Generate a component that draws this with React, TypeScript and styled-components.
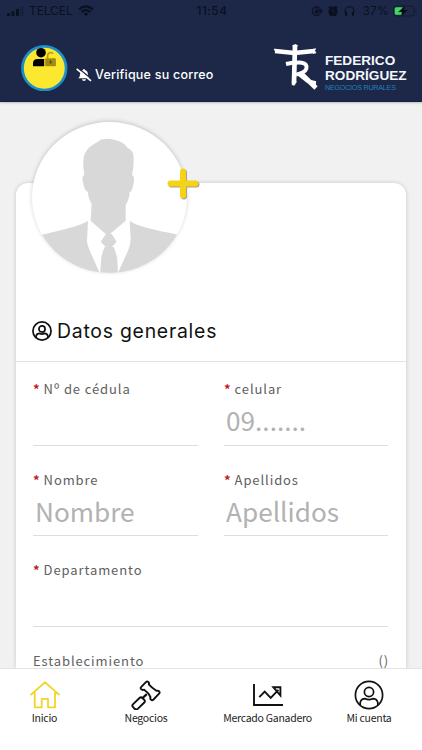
import React from "react";
import styled, { createGlobalStyle } from "styled-components";

const GlobalStyle = createGlobalStyle`
  * { box-sizing: border-box; }
  body { margin: 0; background: #f1f1f2; }
`;

const sans = `"Noto Sans CJK JP", "Noto Sans CJK SC", "Noto Sans", sans-serif`;

const Screen = styled.div`
  width: 422px;
  height: 750px;
  overflow: hidden;
  display: flex;
  flex-direction: column;
  background: #f1f1f2;
  font-family: ${sans};
`;

const Header = styled.header`
  flex: 0 0 102px;
  background: #1d2848;
  border-bottom: 1px solid #18213e;
  box-shadow: 0 1px 2px rgba(60, 70, 100, 0.3);
`;

const StatusBar = styled.div`
  height: 22px;
  display: grid;
  grid-template-columns: 1fr auto 1fr;
  align-items: center;
  padding: 0 5px 0 7px;
  color: #0b1020;
  font: 12px/22px Inter, sans-serif;
`;

const StatusGroup = styled.div<{ $end?: boolean }>`
  display: flex;
  align-items: center;
  height: 22px;
  justify-content: ${(p) => (p.$end ? "flex-end" : "flex-start")};
`;

const Carrier = styled.span`
  margin: 0 5px 0 5px;
  letter-spacing: -0.1px;
`;

const Clock = styled.span`
  font-weight: 500;
  letter-spacing: 0.4px;
`;

const Percent = styled.span`
  margin: 0 4px 0 7px;
  letter-spacing: 0.2px;
`;

const Brand = styled.div`
  display: flex;
  height: 79px;
  padding: 22px 14px 0 21px;
`;

const Message = styled.div`
  display: flex;
  align-items: center;
  height: 20px;
  margin: 21px 0 0 8px;
  gap: 3px;
  color: #fff;
  font: 450 12.5px/20px Inter, sans-serif;
  letter-spacing: 0.22px;
  white-space: nowrap;
`;

const Logo = styled.div`
  display: flex;
  margin-left: auto;
`;

const LogoText = styled.div`
  width: 83px;
  margin-left: 2px;
  padding-top: 10px;
  color: #f4f6fb;
  font: bold 13.6px/14.5px "Liberation Sans", sans-serif;
  white-space: nowrap;
`;

const LogoSub = styled.div`
  color: #1f80bd;
  font: 7.2px/9px "Liberation Sans", sans-serif;
  letter-spacing: -0.25px;
`;

const Card = styled.main`
  flex: 1;
  min-height: 0;
  display: flex;
  flex-direction: column;
  margin: 81px 16px 0;
  background: #fff;
  border-radius: 12px 12px 0 0;
  box-shadow: 0 0 4px rgba(0, 0, 0, 0.18);
`;

const CardTop = styled.div`
  flex: 0 0 179px;
  padding-left: 16px;
  border-bottom: 1px solid #e2e2e2;
`;

const Avatar = styled.div`
  position: relative;
  width: 155px;
  height: 151px;
  margin-top: -61px;
`;

const Portrait = styled.div`
  width: 155px;
  height: 151px;
  overflow: hidden;
  border-radius: 50%;
  background: #fff;
  box-shadow: 0 -1px 4px rgba(0, 0, 0, 0.18);
`;

const AddMark = styled.svg`
  position: absolute;
  left: 134px;
  top: 45px;
`;

const Title = styled.h1`
  display: flex;
  align-items: center;
  gap: 5px;
  height: 30px;
  margin: 43px 0 0;
  color: #111;
  font: 400 19.4px/30px Inter, sans-serif;
  letter-spacing: 0.76px;
`;

const Form = styled.form`
  display: grid;
  flex: none;
  grid-template-columns: 165px 164px;
  column-gap: 26px;
  row-gap: 24px;
  padding: 17px 0 0 17px;
`;

const Field = styled.label<{ $wide?: boolean }>`
  display: flex;
  flex-direction: column;
  height: 66.6px;
  grid-column: ${(p) => (p.$wide ? "1 / -1" : "auto")};
  border-bottom: 1px solid #dedede;
`;

const Label = styled.span`
  display: flex;
  justify-content: space-between;
  height: 20px;
  margin-right: -1px;
  color: #606060;
  font: 400 13px/19.4px ${sans};
  letter-spacing: 0.9px;
  white-space: pre;
`;

const Required = styled.b`
  color: #c01a28;
  font-weight: 700;
  letter-spacing: 0.2px;
`;

const Input = styled.input`
  width: 100%;
  height: 42px;
  padding: 0 0 0 2px;
  border: 0;
  outline: 0;
  background: transparent;
  font: 400 26.2px/42px ${sans};
  &::placeholder {
    color: #b2b2b2;
    opacity: 1;
  }
`;

const Nav = styled.nav`
  flex: 0 0 82px;
  position: relative;
  display: grid;
  grid-template-columns: 89px 114px 129px 74px;
  background: #fff;
  border-top: 1px solid #e4e4e4;
`;

const NavItem = styled.a<{ $active?: boolean }>`
  display: flex;
  flex-direction: column;
  align-items: center;
  padding-top: 11px;
  svg {
    color: ${(p) => (p.$active ? "#f2d42c" : "#111")};
  }
`;

const NavLabel = styled.span`
  color: #1d1d1d;
  font: 10.5px/16px ${sans};
  letter-spacing: -0.26px;
  white-space: nowrap;
`;

const Signal = () => (
  <svg width="17" height="9" viewBox="0 0 17 9" fill="#0b1020">
    <rect y="6" width="3" height="3" rx=".6" />
    <rect x="4.5" y="4.3" width="3" height="4.7" rx=".6" />
    <rect x="9" y="2" width="3" height="7" rx=".6" />
    <rect x="13.5" width="3" height="9" rx=".6" opacity=".3" />
  </svg>
);

const Wifi = () => (
  <svg width="16" height="12" viewBox="0 0 16 12" fill="none" stroke="#0b1020" strokeWidth="2.2">
    <path d="M1 4.4Q8-1.7 15 4.4M3.5 7Q8 3.3 12.5 7" />
    <path d="M5.6 8.7Q8 6.8 10.4 8.7L8 11.2Z" fill="#0b1020" stroke="none" />
  </svg>
);

const StatusIcons = () => (
  <svg width="44" height="12" viewBox="0 0 44 12" fill="none" stroke="#0b1020" strokeWidth="1.1">
    <path d="M9.2 8.4A4.3 4.3 0 1 1 9.5 4.5M7.8 5.2h3.3L9.5 7.3z" />
    <path d="M3.7 5.5h3.8v3H3.7z" fill="#0b1020" stroke="none" />
    <path d="M4.5 5.7V4.5a1.1 1.1 0 0 1 2.2 0v1.2" strokeWidth=".8" />
    <circle cx="22" cy="6.4" r="4" fill="#0b1020" />
    <path d="M17.8 3.2l2.3-1.9M26.2 3.2l-2.3-1.9M19 10.8l1-1M25 10.8l-1-1" strokeWidth="1.7" />
    <path d="M22 4v2.6l1.6.8" stroke="#1d2848" strokeWidth=".7" />
    <path d="M34.2 8V6a4.3 4.3 0 0 1 8.6 0v2" />
    <path d="M35.1 7v3.7M41.9 7v3.7" strokeWidth="2" />
  </svg>
);

const Battery = () => (
  <svg width="24" height="12" viewBox="0 0 24 12">
    <rect x=".5" y="1" width="20.5" height="10" rx="2.8" fill="none" stroke="#121a31" />
    <path d="M3 2.3h6.5v7.4H3Q1.7 9.7 1.7 8.2V3.8Q1.7 2.3 3 2.3z" fill="#42d860" />
    <path d="M12.4.4L5.5 6.9h3.6l-1 4.8 6.6-6.8h-3.8z" fill="#060b16" stroke="#1d2848" strokeWidth=".4" />
    <path d="M22.4 4.4v3.2q1-.4 1-1.6t-1-1.6" fill="#121a31" />
  </svg>
);

const UserBadge = () => (
  <svg width="47" height="47" viewBox="0 0 47 47">
    <circle cx="23.3" cy="24.2" r="21.8" fill="#fce82f" stroke="#1d8ecb" strokeWidth="2.7" />
    <circle cx="20" cy="8.7" r="4.8" />
    <path d="M12 22v-2.7Q12 14.9 16.7 14.9h6.5v7.3H13q-1 0-1-.2z" />
    <path d="M26.6 14.3v-3a3 3 0 0 1 5.4-1.5" fill="none" stroke="#b09916" strokeWidth="1.6" />
    <rect x="24.2" y="14.3" width="10.7" height="8" rx="1" fill="#a18b11" />
    <path d="M29.6 16.5v3" stroke="#4f4500" strokeWidth="1.6" />
  </svg>
);

const MutedBell = () => (
  <svg width="16" height="14" viewBox="0 0 16 14">
    <path d="M2.2 10.3Q4 8.9 4.1 6.2 4.4 2.5 7.2 2V1h1.5v1q2.9.5 3.2 4.2.1 2.7 1.9 4.1zM6 11.3h4q-.2 1.8-2 1.8t-2-1.8z" fill="#fff" />
    <path d="M1.8-.2L16.2 11.5" stroke="#1d2848" strokeWidth="1.3" />
    <path d="M.7.8L15 12.8" stroke="#fff" strokeWidth="1.7" />
  </svg>
);

const LogoMark = () => (
  <svg width="50" height="48" viewBox="186 132 150 144" fill="none" stroke="#fff">
    <path d="M192 153l58 6 60-6" strokeWidth="13" />
    <path d="M252 135l-3 112" strokeWidth="14" />
    <path d="M225 192q25-5 47-4 18 3 14 18-4 12-31 18" strokeWidth="12" />
    <path d="M263 220l24 19q12 11 28 12M272 222l43 42" strokeWidth="14" />
    <path d="M189 147l11 3-4 9zM245 137l9-4 6 5zM306 148l8-2-3 6 4 7-9 1zM243 245l13 0-6 11-7-2z" fill="#fff" strokeWidth="2" />
  </svg>
);

const Businessman = () => (
  <svg width="155" height="151" viewBox="67 34 465 453" fill="#d8d8d8">
    <path d="M246 280l-7-14q-3-9-5-23-9-2-12-19-5-18-3-27l5-4-3-23q-2-31 7-46 9-16 30-27l15-9-3-4 7 3q15-5 37 0 28 5 40 25 18 8 18 29 1 27-5 53 5 0 6 7 1 12-4 29-3 14-9 14-1 22-12 39l0 47-48 41-11 0-46-41z" />
    <path d="M235 331l-3 60q1 13 10 33l27 60-20 20H100l-10-130 20-5q40-8 87-22 20-6 38-16zM360 331l3 55q0 15-8 34l-29 64 22 20h142l20-130-27-7q-55-10-92-22-17-5-31-14z" />
    <path d="M289 370h17l15 23-15 17-17 0-16-17zM285 409h27q8 17 11 38l2 45h-54l3-42q2-23 11-41z" />
  </svg>
);

const AccountIcon = ({ size, weight }: { size: number; weight: number }) => (
  <svg width={size} height={size} viewBox="0 0 30 30" fill="none" stroke="currentColor" strokeWidth={weight}>
    <circle cx="15" cy="15" r="13.6" />
    <circle cx="15" cy="12" r="4.6" />
    <path d="M6.2 25v-2.5q1.1-3.8 5-3.8 3.8 1.7 7.6 0 3.9 0 5 3.8V25" />
  </svg>
);

const HomeIcon = () => (
  <svg width="30" height="30" viewBox="0 0 30 30" fill="none" stroke="currentColor" strokeWidth="1.8" strokeLinejoin="round" strokeLinecap="round">
    <path d="M1 14.6L15 2.3l14 12.3M4.7 12v15.3h7v-8.5H18v8.5h7V12" />
  </svg>
);

const GavelIcon = () => (
  <svg width="30" height="30" viewBox="0 0 30 30" fill="none" stroke="currentColor" strokeWidth="1.9" strokeLinejoin="round">
    <path d="M10.1 9.2q-1-1.2.2-2.3l4.6-4.7q1.2-1.2 2.4-.2 1.2 1 .5 2.4 3.2 3.6 7.6 6.4 1.4-.6 2.6.5 1.3 1.2.1 2.4l-5.6 5.8q-1.3 1.2-2.4.2-1.3-1-.6-2.5-2-4.6-6.3-7.5-1.9.8-3.1-.5z" />
    <path d="M15.8 14.1l-5 4.7" strokeWidth="2.2" />
    <rect x="1" y="20.1" width="13.2" height="6.6" rx="2.2" transform="rotate(-44 7.6 23.4)" />
  </svg>
);

const ChartIcon = () => (
  <svg width="32" height="30" viewBox="0 0 32 30" fill="none" stroke="currentColor" strokeWidth="1.9">
    <path d="M2 4v21h29M7.3 17.2l5.4-5.5 6 6.1 7.7-8M21.3 7.2h7.1v8.3z" />
  </svg>
);

const fields = [
  { label: "Nº de cédula", placeholder: "" },
  { label: "celular", placeholder: "09......." },
  { label: "Nombre", placeholder: "Nombre" },
  { label: "Apellidos", placeholder: "Apellidos" },
];

const tabs = [
  { label: "Inicio", icon: <HomeIcon />, active: true },
  { label: "Negocios", icon: <GavelIcon /> },
  { label: "Mercado Ganadero", icon: <ChartIcon /> },
  { label: "Mi cuenta", icon: <AccountIcon size={30} weight={1.7} /> },
];

export default function App() {
  return (
    <Screen>
      <GlobalStyle />
      <Header>
        <StatusBar>
          <StatusGroup>
            <Signal />
            <Carrier>TELCEL</Carrier>
            <Wifi />
          </StatusGroup>
          <Clock>11:54</Clock>
          <StatusGroup $end>
            <StatusIcons />
            <Percent>37%</Percent>
            <Battery />
          </StatusGroup>
        </StatusBar>
        <Brand>
          <UserBadge />
          <Message>
            <MutedBell />
            Verifique su correo
          </Message>
          <Logo>
            <LogoMark />
            <LogoText>
              FEDERICO
              <br />
              RODRÍGUEZ
              <LogoSub>NEGOCIOS RURALES</LogoSub>
            </LogoText>
          </Logo>
        </Brand>
      </Header>
      <Card>
        <CardTop>
          <Avatar>
            <Portrait>
              <Businessman />
            </Portrait>
            <AddMark width="35" height="35" viewBox="0 0 35 35" fill="none" strokeWidth="6" strokeLinecap="round">
              <path d="M18 5.5v24M5.5 17.5h25" stroke="#aaa18a" />
              <path d="M17 4.5v24M4.5 16.5h25" stroke="#f5d316" />
            </AddMark>
          </Avatar>
          <Title>
            <AccountIcon size={20} weight={2.6} />
            Datos generales
          </Title>
        </CardTop>
        <Form>
          {fields.map((f) => (
            <Field key={f.label}>
              <Label>
                <span>
                  <Required>*</Required> {f.label}
                </span>
              </Label>
              <Input placeholder={f.placeholder} />
            </Field>
          ))}
          <Field $wide>
            <Label>
              <span>
                <Required>*</Required> Departamento
              </span>
            </Label>
            <Input />
          </Field>
          <Field $wide>
            <Label>
              <span>Establecimiento</span>
              <span>()</span>
            </Label>
          </Field>
        </Form>
      </Card>
      <Nav>
        {tabs.map((t) => (
          <NavItem key={t.label} $active={t.active}>
            {t.icon}
            <NavLabel>{t.label}</NavLabel>
          </NavItem>
        ))}
      </Nav>
    </Screen>
  );
}
